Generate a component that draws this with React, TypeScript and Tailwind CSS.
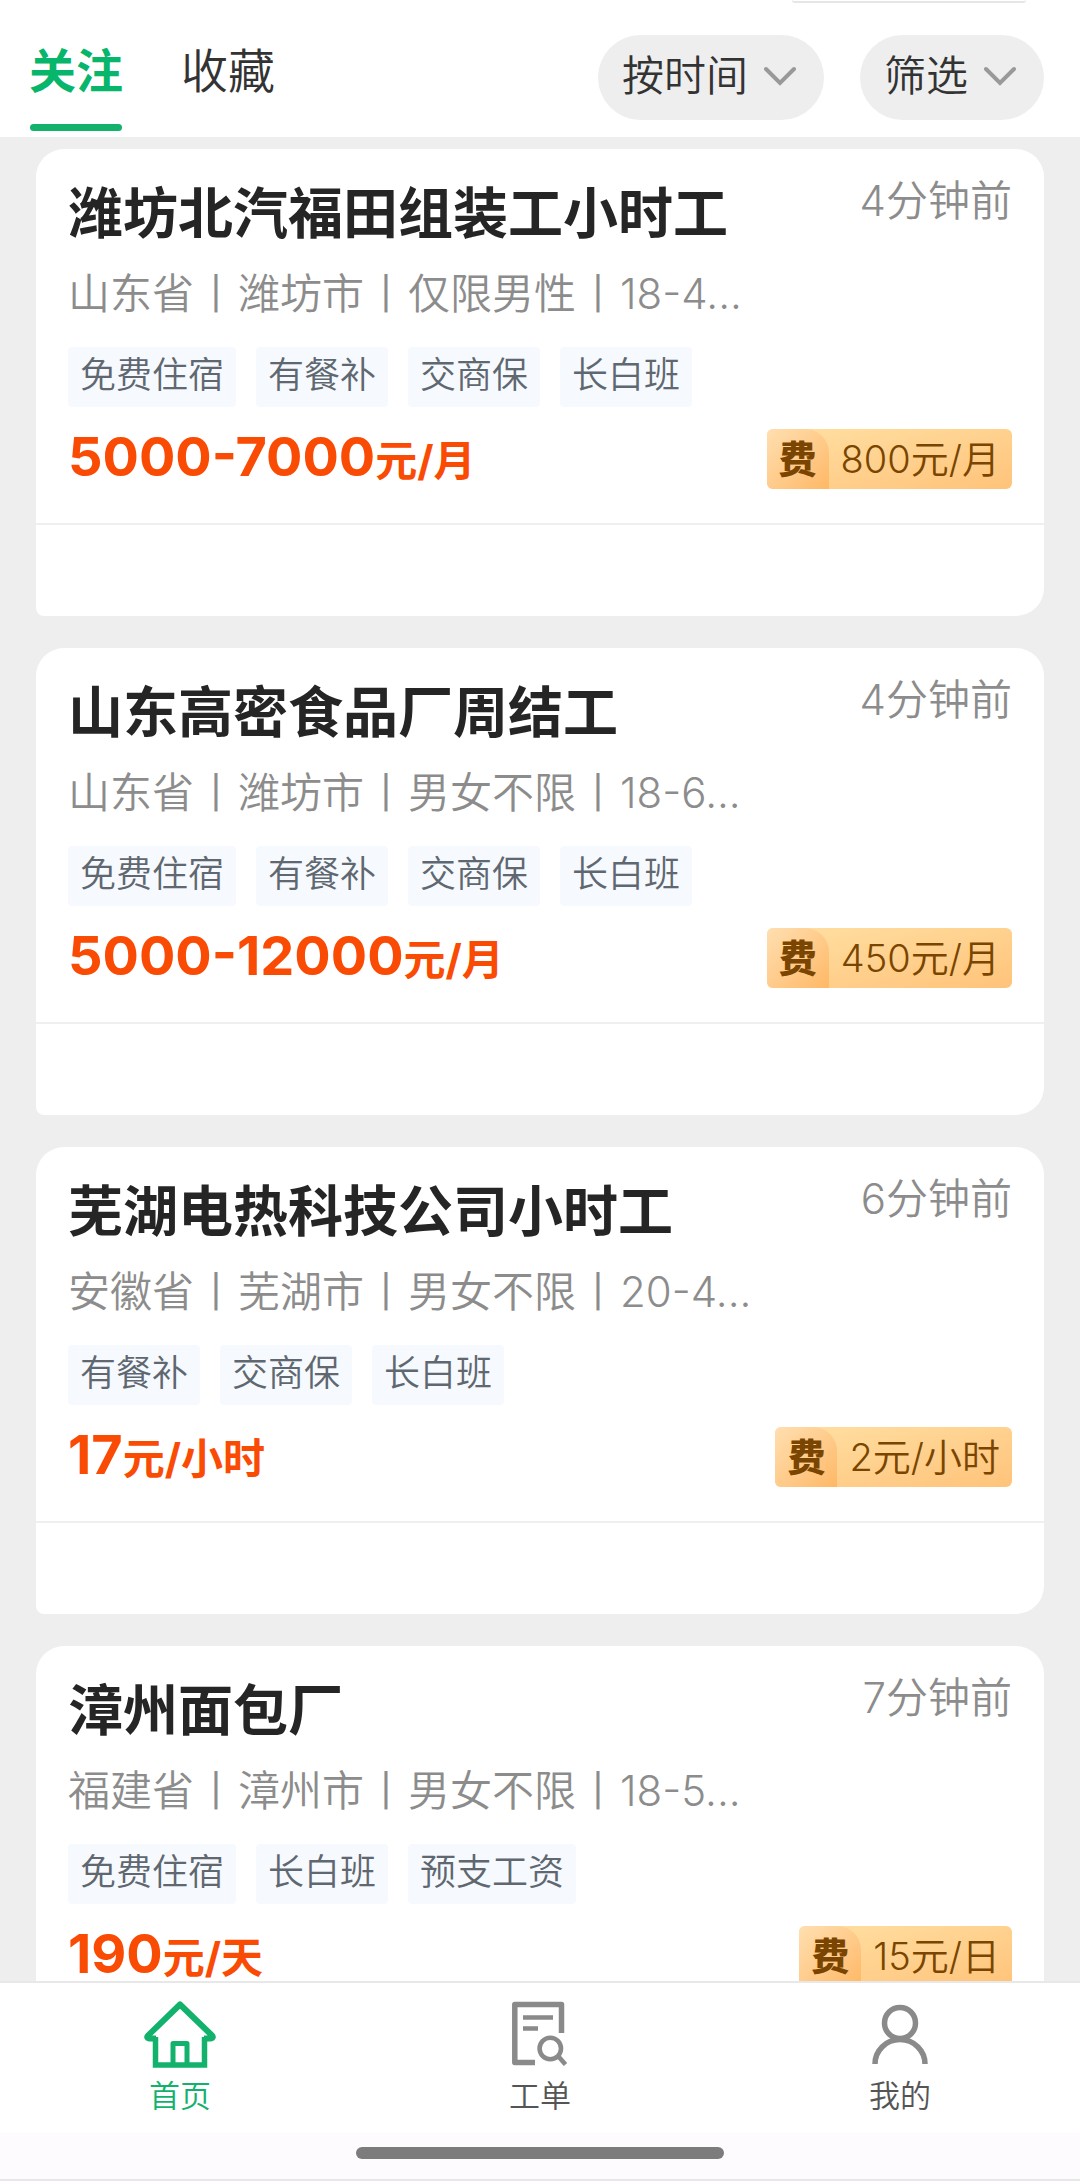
import React, { useState } from 'react';

interface Job {
  title: string;
  time: string;
  info: string[];
  tags: string[];
  salary: string;
  unit: string;
  fee: string;
}

const jobs: Job[] = [
  {
    title: '潍坊北汽福田组装工小时工',
    time: '4分钟前',
    info: ['山东省', '潍坊市', '仅限男性', '18-4...'],
    tags: ['免费住宿', '有餐补', '交商保', '长白班'],
    salary: '5000-7000',
    unit: '元/月',
    fee: '800元/月',
  },
  {
    title: '山东高密食品厂周结工',
    time: '4分钟前',
    info: ['山东省', '潍坊市', '男女不限', '18-6...'],
    tags: ['免费住宿', '有餐补', '交商保', '长白班'],
    salary: '5000-12000',
    unit: '元/月',
    fee: '450元/月',
  },
  {
    title: '芜湖电热科技公司小时工',
    time: '6分钟前',
    info: ['安徽省', '芜湖市', '男女不限', '20-4...'],
    tags: ['有餐补', '交商保', '长白班'],
    salary: '17',
    unit: '元/小时',
    fee: '2元/小时',
  },
  {
    title: '漳州面包厂',
    time: '7分钟前',
    info: ['福建省', '漳州市', '男女不限', '18-5...'],
    tags: ['免费住宿', '长白班', '预支工资'],
    salary: '190',
    unit: '元/天',
    fee: '15元/日',
  },
];

const HomeIcon = () => (
  <svg width="72" height="68" viewBox="0 0 72 68" fill="none" stroke="currentColor">
    <path d="M12 38.5 H5 Q2 37.5 4 35.5 L36 4.5 L68 35.5 Q70 37.5 67 38.5 H60" strokeWidth="6" strokeLinejoin="round" />
    <path d="M11.5 37 V65 H60.5 V37" strokeWidth="5.5" />
    <path d="M29 64 V43.5 H43 V64" strokeWidth="5" strokeLinejoin="round" />
  </svg>
);

const OrderIcon = () => (
  <svg width="56" height="68" viewBox="0 0 56 68" fill="none" stroke="currentColor" strokeLinejoin="round">
    <path d="M23 62.5 H2.8 V4.5 H49.5 V33" strokeWidth="5.5" />
    <path d="M11 17.5 H41 M11 28.5 H26" strokeWidth="4.6" />
    <circle cx="38.3" cy="48.5" r="10.7" strokeWidth="4.6" />
    <path d="M46 56 L53.5 64.5" strokeWidth="4.6" />
  </svg>
);

const UserIcon = () => (
  <svg width="56" height="68" viewBox="0 0 56 68" fill="none" stroke="currentColor" strokeWidth="5.5">
    <circle cx="28" cy="23" r="15.5" />
    <path d="M3 64 A25 24.5 0 0 1 53 64" />
  </svg>
);

const Chevron = () => (
  <svg width="32" height="20" viewBox="0 0 32 20" fill="none" stroke="#999999" strokeWidth="4" strokeLinecap="round">
    <path d="M2 3 L16 17 L30 3" />
  </svg>
);

const JobCard: React.FC<{ job: Job }> = ({ job }) => (
  <article className="shrink-0 rounded-[28px] rounded-bl-lg bg-white">
    <div className="border-b-2 border-[#efefef] px-8 pt-8 pb-[34px]">
      <div className="flex items-start justify-between">
        <h2 className="text-[55px] leading-[64px] font-bold whitespace-nowrap text-[#252525]">{job.title}</h2>
        <time className="text-[42px] leading-[40px] font-[350] whitespace-nowrap text-[#8c8c8c]">{job.time}</time>
      </div>
      <p className="mt-[19px] text-[42px] leading-[60px] font-[350] whitespace-nowrap text-[#8c8c8c]">
        {job.info.map((part, index) => (
          <React.Fragment key={part}>
            {index > 0 && <span className="mx-px">丨</span>}
            {part}
          </React.Fragment>
        ))}
      </p>
      <ul className="mt-[23px] flex gap-5">
        {job.tags.map((tag) => (
          <li key={tag} className="h-[60px] rounded bg-[#f6faff] px-3 text-[36px] leading-[56px] font-[350] whitespace-nowrap text-[#5f6870]">
            {tag}
          </li>
        ))}
      </ul>
      <div className="mt-[22px] flex h-[60px] items-center justify-between">
        <p className="text-[54px] leading-[60px] font-bold whitespace-nowrap text-[#fa4b05]">
          {job.salary}
          <span className="text-[42px]">{job.unit}</span>
        </p>
        <div className="flex overflow-hidden rounded-md bg-linear-to-br from-[#ffe0a3] to-[#ffc37a] text-[38px] leading-[60px] whitespace-nowrap text-[#7a4500]">
          <span className="rounded-tr-[24px] bg-linear-to-br from-[#ffdfb0] to-[#ffb865] px-3 font-black">费</span>
          <span className="px-3 font-[350]">{job.fee}</span>
        </div>
      </div>
    </div>
    <div className="h-[91px]" />
  </article>
);

const App: React.FC = () => {
  const [tab, setTab] = useState<string>('关注');
  const [page, setPage] = useState<string>('首页');

  const navItems = [
    { label: '首页', icon: <HomeIcon /> },
    { label: '工单', icon: <OrderIcon /> },
    { label: '我的', icon: <UserIcon /> },
  ];

  return (
    <div className="flex h-screen flex-col bg-[#eeeeee] font-[Inter,'Noto_Sans_CJK_SC',sans-serif]">
      <header className="relative flex shrink-0 items-start justify-between bg-white pt-[35px] pr-9 pb-[6px] pl-[29px]">
        {/* lower edge of the panel scrolled off above */}
        <div className="absolute top-0 right-[54px] h-[3px] w-[234px] rounded-b-full border-b-2 border-[#e6e6e6]" />
        <div className="flex gap-[58px]">
          {['关注', '收藏'].map((name) => (
            <button
              key={name}
              onClick={() => setTab(name)}
              className={`flex flex-col items-center text-[47px] leading-[72px] ${tab === name ? 'font-bold text-[#07b56b]' : 'font-[350] text-[#333333]'}`}
            >
              {name}
              <span className={`mt-[17px] h-[7px] w-[92px] rounded-full ${tab === name ? 'bg-[#12b26c]' : 'bg-transparent'}`} />
            </button>
          ))}
        </div>
        <div className="flex gap-9">
          {['按时间', '筛选'].map((name) => (
            <button
              key={name}
              className="flex h-[85px] items-center gap-4 rounded-full bg-[#eeeeee] pr-7 pb-1 pl-6 text-[42px] leading-[60px] font-[350] text-[#333333]"
            >
              {name}
              <Chevron />
            </button>
          ))}
        </div>
      </header>

      <main className="flex min-h-0 flex-1 flex-col gap-8 overflow-hidden px-9 pt-3">
        {jobs.map((job) => (
          <JobCard key={job.title} job={job} />
        ))}
      </main>

      <nav className="shrink-0 border-y-2 border-[#e8e8e8] bg-[#fefbfe]">
        <div className="grid h-[150px] grid-cols-3 bg-white pt-[17px]">
          {navItems.map((item) => (
            <button
              key={item.label}
              onClick={() => setPage(item.label)}
              className={`flex flex-col items-center gap-2 ${page === item.label ? 'text-[#12b26c]' : 'text-[#8a8a8a]'}`}
            >
              {item.icon}
              <span className={`text-[31px] leading-[40px] font-[350] ${page === item.label ? '' : 'text-[#555555]'}`}>{item.label}</span>
            </button>
          ))}
        </div>
        <div className="flex h-[46px] justify-center pt-[14px]">
          <div className="h-3 w-[34%] rounded-full bg-[#7c7c7c]" />
        </div>
      </nav>
    </div>
  );
};

export default App;
